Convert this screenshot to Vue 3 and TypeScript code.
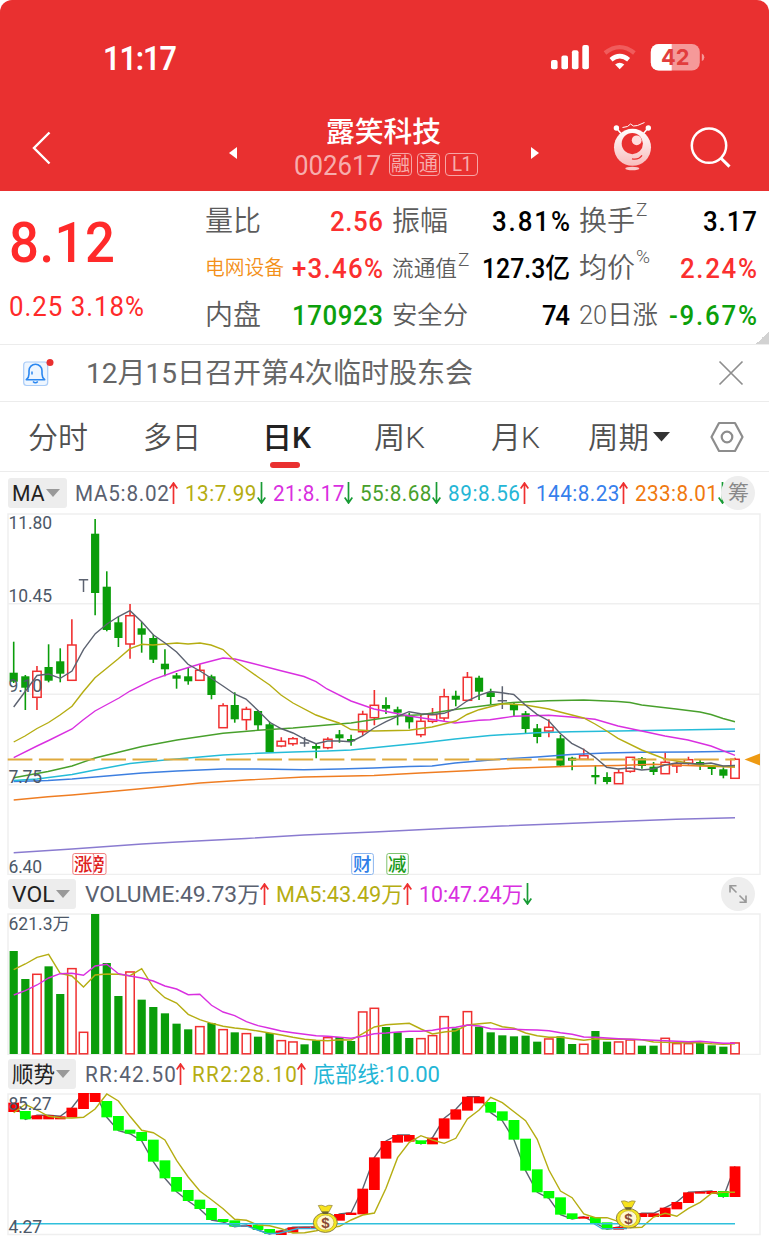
<script setup lang="ts">
import { h } from 'vue'

interface FitProps { t: string; w: number; s: number }

/* Single line of text set to an exact advance width, centred on its cap height.
   Figures are condensed a little and tracked out. */
const Fit = (p: FitProps) => {
  const figures = /\d/.test(p.t) && /^[\x20-\x7e]+$/.test(p.t)
  const k = figures ? 0.94 : 1
  return h('svg', { width: p.w, height: p.s, class: 'fit', style: { overflow: 'visible', display: 'block', flex: 'none' } }, [
    h('text', {
      x: 0, y: p.s * 0.855, 'font-size': p.s, textLength: p.w / k,
      lengthAdjust: figures ? 'spacing' : 'spacingAndGlyphs',
      transform: `scale(${k} 1)`, fill: 'currentColor',
    }, p.t),
  ])
}
Fit.props = ['t', 'w', 's']

const stats = [
  { k: '量比', kw: 56, ks: 28, v: '2.56', vw: 53, c: 'red' },
  { k: '振幅', kw: 56, ks: 28, v: '3.81%', vw: 78, c: 'black' },
  { k: '换手', kw: 56, ks: 28, sup: 'Z', v: '3.17', vw: 54, c: 'black' },
  { k: '电网设备', kw: 79, ks: 20, v: '+3.46%', vw: 91, c: 'red', kc: 'orange' },
  { k: '流通值', kw: 65, ks: 21.7, sup: 'Z', v: '127.3亿', vw: 88, c: 'black' },
  { k: '均价', kw: 56, ks: 28, sup: '%', v: '2.24%', vw: 77, c: 'red' },
  { k: '内盘', kw: 56, ks: 28, v: '170923', vw: 91, c: 'green' },
  { k: '安全分', kw: 76, ks: 25.5, v: '74', vw: 28, c: 'black' },
  { k: '20日涨', kw: 79, ks: 26, v: '-9.67%', vw: 88, c: 'green' },
]

interface Ind { t: string; w: number; c: string; a?: 'up' | 'down' }
const maRow: Ind[] = [
  { t: 'MA5:8.02', w: 94, c: 'slate', a: 'up' },
  { t: '13:7.99', w: 71.5, c: 'olive', a: 'down' },
  { t: '21:8.17', w: 71.5, c: 'magenta', a: 'down' },
  { t: '55:8.68', w: 71.5, c: 'leaf', a: 'down' },
  { t: '89:8.56', w: 72, c: 'cyan', a: 'up' },
  { t: '144:8.23', w: 83.5, c: 'blue', a: 'up' },
  { t: '233:8.01', w: 83, c: 'amber', a: 'down' },
]
const volRow: Ind[] = [
  { t: 'VOLUME:49.73万', w: 175, c: 'slate', a: 'up' },
  { t: 'MA5:43.49万', w: 127, c: 'olive', a: 'up' },
  { t: '10:47.24万', w: 104, c: 'magenta', a: 'down' },
]
const rrRow: Ind[] = [
  { t: 'RR:42.50', w: 91, c: 'slate', a: 'up' },
  { t: 'RR2:28.10', w: 105, c: 'olive', a: 'up' },
  { t: '底部线:10.00', w: 127, c: 'cyan' },
]

const X0 = 13.7
const STEP = 11.634
const cx = (i: number) => X0 + STEP * i

/* kind, high, body top, body bottom, low */
type Candle = [string, number, number, number, number]
const candles: Candle[] = [
  ['g', 641.7, 672.7, 681.7, 683], ['g', 675, 676.3, 687.7, 710], ['r', 666, 671.3, 697.3, 710],
  ['g', 644.3, 667, 680.7, 682.3], ['g', 648.3, 661.3, 673.7, 682.3], ['r', 619.3, 645, 680.3, 680.3],
  ['t', 579, 579, 592, 592], ['g', 519, 533.7, 593, 615.3], ['g', 571.3, 586.7, 630, 631.3],
  ['g', 616.7, 622.3, 638, 647], ['r', 604, 615.7, 644, 658.7], ['g', 622, 628.3, 634.7, 652.7],
  ['g', 634.7, 638, 659.7, 663], ['g', 649.3, 663.7, 669.3, 676.3], ['g', 673, 675.3, 678.7, 688.7],
  ['g', 668, 676.3, 681.3, 684.7], ['r', 664.3, 670.3, 680.3, 680.3], ['g', 674.7, 676.3, 695, 699.3],
  ['r', 703.3, 705.7, 727.7, 727.7], ['g', 692.3, 705, 719.3, 722.7], ['r', 706.7, 709.3, 719.7, 730.3],
  ['g', 710, 711, 725.3, 730], ['g', 721.7, 724.3, 752.3, 752.3], ['r', 737.3, 741.3, 746, 747.3],
  ['r', 737, 738.7, 743.7, 745.7], ['d', 737, 743, 743, 746.7], ['g', 744, 746, 748.7, 758.3],
  ['r', 737.3, 739.3, 747.7, 749.3], ['g', 730, 734.3, 738.3, 742.7], ['g', 734.7, 739, 741.3, 745.7],
  ['r', 710.7, 714.3, 731.7, 735.7], ['r', 690, 705.3, 717.7, 725.3], ['g', 697.3, 705, 708.7, 714],
  ['g', 706.7, 709.3, 712.7, 725.3], ['g', 712.7, 716, 722.3, 728.7], ['r', 714.7, 721.3, 734.7, 737.3],
  ['r', 708, 714.7, 721.3, 723.3], ['r', 688.7, 696.7, 718, 720.7], ['g', 690.7, 695.7, 699.7, 706.3],
  ['r', 672, 677.3, 700.3, 700.3], ['g', 675.7, 677.7, 691.7, 700], ['g', 688.7, 692.3, 697, 704.3],
  ['d', 686.3, 700.7, 700.7, 709], ['g', 702.7, 704, 710.3, 716], ['g', 711, 713.3, 729, 733],
  ['g', 724, 728.3, 737, 743.3], ['r', 719.3, 727.3, 731, 737.3], ['g', 735, 738.3, 765.7, 766.7],
  ['g', 756.7, 757.7, 760.7, 770.3], ['r', 748.7, 755.7, 759.3, 759.3], ['g', 765.3, 775, 777.3, 784.3],
  ['g', 772.3, 777, 782, 784.3], ['r', 769.3, 772.7, 783.7, 783.7], ['r', 757.3, 757.3, 771.3, 772.7],
  ['g', 757, 758.3, 766, 768.7], ['g', 762, 766.7, 772, 775], ['r', 752.7, 762.3, 773.7, 773.7],
  ['r', 761.7, 763.7, 766, 773], ['r', 756.7, 759.7, 763.3, 764.7], ['g', 760, 762, 765.3, 770],
  ['g', 765.3, 766.3, 769, 775], ['g', 767.3, 769.3, 775.7, 778.3], ['r', 757.7, 759.3, 778.3, 778.3],
]

const lines = [
  { c: '#8a7bd0', p: '13.7,852.7 72,849 142,844 177,842 246,838.5 304,835 374,832 444,828.5 502,826 560,823.7 630,821 676,819.3 735,817.7' },
  { c: '#ef7d22', p: '13.7,800 48,796.7 72,795 119,790.7 165,786.5 200,783 246,780 304,777 374,775.5 420,773 467,770.7 513,768.3 571,766.3 618,765.5 653,764.3 700,766 735,767' },
  { c: '#3d7fe0', p: '13.7,781.5 48,780.5 72,779 95,777 142,773 177,771 223,769 258,769 304,769.7 340,769 374,768 409,766.5 432,766 455,763 479,761 502,759 537,757 571,754.5 606,753 641,752.3 688,752 735,751.3' },
  { c: '#25bcd8', p: '13.7,780.5 37,779 72,774.5 95,770 130,763.5 165,760 200,757 223,755 258,753.3 293,752 327,751 351,750 386,746.5 421,743 455,739 490,735.5 537,732.7 571,731.7 618,731 735,729' },
  { c: '#48a02c', p: '13.7,777.7 48,771.5 72,766 95,758 142,746.5 177,740 223,733.3 258,730.3 293,728 327,725 351,723 397,716 421,714.7 455,709.5 490,705 513,702.5 548,700.7 583.7,700 618,701.5 630,702.5 641.7,705 676,709 700,712 711,714.5 723,718.5 735,721.7' },
  { c: '#d92fe0', p: '13.7,757.7 37,746 48.6,740.5 72,729 83,720 95,711 119,698 130,691 153,679.7 177,671 200,664 223,658 235,659 250,662.7 281,670.7 304,676.5 316,681.7 327,689 351,701 374,709 409,716 444,721.3 455,723 479,720.3 490,719.7 502,718 513.7,716.3 548.7,715.3 571,717 595,719.3 618,726 641.7,731 665,736 688,740 711,746 735,755.3' },
  { c: '#b5ad12', p: '13.7,742 25,736 37,728.5 48.6,722.5 60,715 72,706.3 83,692 95,677.7 107,668 118,659 130,648.7 142,644.3 153,645 177,643 188,644 200,643 211,645 223,649.5 234,660 246,668.5 258,677 269.7,685 281,695 293,703 316,715 327,719 339,723 351,729.5 374,731 409,730.3 432,727 456,721 467,714.5 479,709.7 502,703.7 525,705 548.7,709 560,712 583.7,718 595,724 606.7,731 618,738.3 641.7,750 665,759 688,763 700,765 735,767' },
  { c: '#5c6270', p: '13.7,707 37,675.5 48.6,674 60.3,678.3 72,671 83.6,649.3 95.3,633.7 107,624 118.5,616.5 130,610.7 141.7,621.7 153.5,635 165,643 176.6,652 188,664.3 200,671 211,678 223,686 234.6,694 246,699 258,710.5 269.7,722.3 281,728.5 293,733 304.6,739 316,743.7 327.6,741 339,741 351,741.7 362.6,736 374,728 386,721.7 397.5,716.3 409,711.7 420.6,713.7 432,714.5 444,713.3 455.6,709 467,701 479,695.3 490.3,691.5 502,692.7 513.7,694.5 525,704.7 537,714.3 548.7,720.7 560,733.3 571.7,743.3 583,749 595,757.3 606.7,767.3 618,769 630,768 641.7,770 653,769 665,765 676,763 688,763.5 700,764 711,763 723,766 735,765.5' },
]

const priceAxis = [
  { t: '11.80', y: 528.7 }, { t: '10.45', y: 602 }, { t: '9.10', y: 692 }, { t: '7.75', y: 782.5 }, { t: '6.40', y: 872.7 },
]

/* Volume and trend series are stored in thirds of a pixel below the panel's header row. */
const vols: [string, number][] = [
  ['g', 228], ['g', 312], ['r', 297], ['g', 274], ['g', 357], ['r', 280], ['r', 471], ['g', 117], ['g', 264], ['g', 363],
  ['r', 290], ['g', 374], ['g', 396], ['g', 415], ['g', 446], ['g', 463], ['r', 454], ['g', 444], ['r', 463], ['g', 472],
  ['r', 475], ['g', 485], ['g', 474], ['r', 496], ['r', 500], ['g', 508], ['g', 496], ['r', 487], ['g', 486], ['g', 498],
  ['r', 410], ['r', 399], ['g', 456], ['g', 472], ['g', 489], ['r', 490], ['r', 481], ['r', 424], ['g', 460], ['r', 409],
  ['g', 455], ['g', 472], ['g', 481], ['g', 484], ['g', 482], ['g', 500], ['r', 491], ['g', 484], ['g', 507], ['r', 507],
  ['g', 468], ['g', 500], ['r', 500], ['r', 494], ['g', 512], ['g', 512], ['r', 489], ['r', 505], ['r', 505], ['g', 504],
  ['g', 511], ['g', 515], ['r', 503],
]
const vma5 = [284, 267, 247, 238, 295, 303, 336, 300, 297, 298, 302, 281, 337, 368, 384, 418, 434, 445, 454, 459, 463, 468, 474, 480, 487, 493, 496, 497, 494, 495, 476, 456, 449, 447, 445, 462, 477, 471, 467, 450, 446, 443, 455, 460, 474, 482, 487, 487, 491, 496, 491, 493, 493, 493, 494, 501, 502, 503, 503, 503, 506, 508, 506]
const vma10 = [360, 347, 330, 309, 296, 295, 301, 273, 268, 296, 303, 309, 318, 333, 342, 359, 358, 391, 411, 422, 440, 452, 460, 468, 473, 478, 482, 484, 487, 490, 484, 476, 474, 471, 469, 469, 466, 460, 457, 450, 453, 461, 463, 463, 464, 465, 467, 473, 478, 486, 487, 489, 491, 493, 494, 496, 497, 499, 500, 499, 502, 505, 505]

const rr: [string, number, number][] = [
  ['r', 143, 171], ['g', 168, 193], ['r', 181, 193], ['r', 181, 193], ['r', 184, 193], ['r', 158, 187], ['r', 113, 162], ['r', 113, 141],
  ['g', 138, 187], ['g', 183, 227], ['g', 224, 236], ['g', 231, 258], ['g', 254, 320], ['g', 316, 370], ['g', 366, 410], ['g', 405, 438],
  ['g', 434, 462], ['g', 459, 495], ['g', 492, 501], ['g', 496, 515], ['r', 510, 516], ['g', 509, 525], ['g', 522, 537], ['r', 527, 540],
  ['r', 517, 533], ['r', 516, 521], ['r', 515, 520], ['r', 495, 518], ['r', 477, 497], ['r', 473, 480], ['r', 401, 478], ['r', 307, 405],
  ['r', 258, 311], ['r', 240, 263], ['r', 240, 260], ['g', 256, 267], ['r', 248, 268], ['r', 190, 251], ['r', 163, 194], ['r', 125, 167],
  ['r', 125, 145], ['g', 141, 173], ['g', 169, 197], ['g', 195, 254], ['g', 251, 347], ['g', 343, 412], ['g', 408, 430], ['g', 427, 479],
  ['g', 475, 492], ['r', 485, 491], ['g', 486, 504], ['g', 502, 523], ['r', 516, 524], ['r', 485, 518], ['r', 475, 486], ['r', 475, 486],
  ['r', 458, 486], ['r', 441, 463], ['r', 412, 444], ['r', 410, 416], ['r', 408, 417], ['g', 408, 426], ['r', 334, 426],
]
const rr2 = [173, 148, 165, 184, 188, 189, 187, 162, 117, 138, 184, 226, 233, 255, 316, 366, 408, 434, 461, 493, 496, 510, 512, 521, 534, 533, 527, 519, 514, 495, 480, 474, 400, 308, 262, 242, 255, 265, 250, 192, 165, 127, 143, 170, 197, 253, 345, 408, 428, 477, 488, 488, 500, 518, 517, 486, 475, 484, 460, 442, 415, 412, 412]

const path = (a: number[], base: number) => a.map((v, i) => `${cx(i).toFixed(1)},${(base + v / 3).toFixed(1)}`).join(' ')
const rrLine = rr.map(([k, a, b]) => (k === 'r' ? a : b))
const bags = [{ x: 325.3, y: 1219 }, { x: 628.3, y: 1214.7 }]
</script>

<template>
  <div class="app">
    <header class="top">
      <div class="status">
        <div class="clock"><Fit t="11:17" :w="74" :s="32.5" /></div>
        <svg class="signals" width="156" height="30" viewBox="549 43 156 30">
          <g fill="#fff">
            <rect x="551" y="60" width="6.6" height="9.3" rx="2" />
            <rect x="561.4" y="55.6" width="6.6" height="13.7" rx="2" />
            <rect x="571.9" y="50.2" width="6.6" height="19.1" rx="2" />
            <rect x="582.3" y="45" width="6.6" height="24.3" rx="2" />
            <path d="M619.7 69.2l-4.6-4.7q4.6-3.6 9.2 0z" />
          </g>
          <path d="M611 59.8q8.8-7.2 17.6 0" fill="none" stroke="#fff" stroke-width="4.6" />
          <path d="M605 53q14.7-11.8 29.4 0" fill="none" stroke="#f05c5c" stroke-width="4.2" />
          <rect x="650.8" y="44" width="49" height="26.6" rx="8" fill="#f59999" />
          <path d="M658.8 44H671.7V70.6H658.8a8 8 0 0 1-8-8V52a8 8 0 0 1 8-8z" fill="#fff" />
          <path d="M701.8 53.5q2.5 1 2.5 3.8t-2.5 3.8z" fill="#f59999" />
          <text x="661" y="65.2" textLength="28.5" lengthAdjust="spacingAndGlyphs" class="batt">42</text>
        </svg>
      </div>
      <div class="nav">
        <svg class="back" width="20" height="34" viewBox="0 0 20 34"><path d="M17.5 1.5L2 17l15.5 15.5" fill="none" stroke="#fff" stroke-width="2.4" /></svg>
        <svg class="prev" width="8" height="12"><path d="M8 0v12L0 6z" fill="#fff" /></svg>
        <div class="title">
          <div class="name"><Fit t="露笑科技" :w="115" :s="28.7" /></div>
          <div class="code">
            <Fit t="002617" :w="87" :s="27.5" />
            <span class="tag first"><Fit t="融" :w="19" :s="19" /></span>
            <span class="tag"><Fit t="通" :w="19" :s="19" /></span>
            <span class="tag wide"><Fit t="L1" :w="20" :s="20" /></span>
          </div>
        </div>
        <svg class="next" width="8" height="12"><path d="M0 0v12l8-6z" fill="#fff" /></svg>
        <svg class="robot" width="42" height="50" viewBox="611 122 42 50">
          <defs>
            <linearGradient id="rb" x1="0" y1="0" x2="0" y2="1"><stop offset="0" stop-color="#fff" /><stop offset="1" stop-color="#f8bcbc" /></linearGradient>
          </defs>
          <g stroke="#fff" fill="none">
            <path d="M616 128.5l5 6M648.5 128.5l-5 6" stroke-width="1.5" />
            <path d="M622.5 128.5l5-1 3-2.5 3 2 4-.5 7-3" stroke-width="1" />
          </g>
          <circle cx="616.4" cy="129" r="2.7" fill="#fff" /><circle cx="648.3" cy="129" r="2.7" fill="#fff" />
          <circle cx="632.5" cy="148.3" r="18.5" fill="url(#rb)" />
          <circle cx="632.3" cy="144.6" r="10.6" fill="#e93030" />
          <circle cx="636.7" cy="141.3" r="4.9" fill="#fdd" />
          <path d="M632 159.8q6.5 1.5 10-3.5" fill="none" stroke="#e93030" stroke-width="1.3" />
          <ellipse cx="632.3" cy="169.5" rx="7" ry="1.7" fill="#fac8c8" />
        </svg>
        <svg class="search" width="42" height="42" viewBox="690 127 42 42">
          <g fill="none" stroke="#fff" stroke-width="2.5"><circle cx="709" cy="145.6" r="17.2" /><path d="M720.5 157.8l9 8.8" stroke-width="3" /></g>
        </svg>
      </div>
    </header>

    <section class="quote">
      <div class="price">
        <div class="last"><Fit t="8.12" :w="106" :s="56" /></div>
        <div class="chg"><Fit t="0.25 3.18%" :w="135" :s="27.5" /></div>
      </div>
      <div class="stats">
        <div v-for="s in stats" :key="s.k" class="cell">
          <div class="key" :class="s.kc"><Fit :t="s.k" :w="s.kw" :s="s.ks" /><span v-if="s.sup" class="sup">{{ s.sup }}</span></div>
          <div class="val" :class="s.c"><Fit :t="s.v" :w="s.vw" :s="27.5" /></div>
        </div>
      </div>
      <i class="fold"></i>
    </section>

    <section class="notice">
      <svg class="bell" width="32" height="32" viewBox="22 355 32 32">
        <rect x="23.7" y="361" width="24" height="23.5" rx="3" fill="#eef6ff" stroke="#a9ccf8" stroke-width="1.2" />
        <path d="M26.3 378.7q2.7-2.2 2.7-5.7v-3.3a6.5 6.5 0 0 1 13 0v3.3q0 3.5 2.7 5.7z" fill="none" stroke="#2b87f0" stroke-width="1.6" stroke-linejoin="round" />
        <path d="M33 380.5q2.4 2.6 4.8 0M32 370.5v3" fill="none" stroke="#2b87f0" stroke-width="1.5" />
        <circle cx="50" cy="361.5" r="3.5" fill="#e93030" />
      </svg>
      <Fit class="ntext" t="12月15日召开第4次临时股东会" :w="387" :s="28" />
      <svg class="close" width="26" height="26" viewBox="0 0 26 26"><path d="M1.5 1.5l23 23M24.5 1.5l-23 23" stroke="#8e8e8e" stroke-width="1.7" /></svg>
    </section>

    <nav class="tabs">
      <div class="tab"><Fit t="分时" :w="60" :s="30" /></div>
      <div class="tab"><Fit t="多日" :w="58" :s="30" /></div>
      <div class="tab on"><Fit t="日K" :w="49" :s="30" /></div>
      <div class="tab"><Fit t="周K" :w="51" :s="30" /></div>
      <div class="tab"><Fit t="月K" :w="49" :s="30" /></div>
      <div class="tab period"><Fit t="周期" :w="61" :s="30" /><svg width="17" height="10"><path d="M0 0h17l-8.5 9.5z" fill="#333" /></svg></div>
      <svg class="hex" width="36" height="32" viewBox="0 0 36 32"><g fill="none" stroke="#8d8d8d" stroke-width="2.2"><path d="M10 2h16l7.5 14-7.5 14H10L2.5 16z" stroke-linejoin="round" /><circle cx="18" cy="16" r="5.3" /></g></svg>
    </nav>

    <div class="ind ma">
      <div class="pill short"><Fit t="MA" :w="32.5" :s="22" /><i></i></div>
      <div class="vals">
        <div v-for="m in maRow" :key="m.t" class="v" :class="m.c">
          <Fit :t="m.t" :w="m.w" :s="22" />
          <svg v-if="m.a" class="arr" :class="m.a" width="9" height="22"><path d="M4.5 22V1M.7 6.5L4.5 1l3.8 5.5" /></svg>
        </div>
      </div>
      <div class="round"><Fit t="筹" :w="21" :s="21" /></div>
    </div>

    <svg class="panel" width="769" height="362" viewBox="0 513 769 362">
      <g stroke="#efefef" stroke-width="1.5" fill="none">
        <path d="M8 514H760V874.5H8zM8 603.7H760M8 694.3H760M8 784.7H760" />
      </g>
      <g v-for="(c, i) in candles" :key="i">
        <template v-if="c[0] === 'g'">
          <path :d="`M${cx(i)} ${c[1]}V${c[4]}`" stroke="#0a9d0a" stroke-width="1.6" />
          <rect :x="cx(i) - 4.1" :y="c[2]" width="8.2" :height="c[3] - c[2]" fill="#0a9d0a" />
        </template>
        <template v-else-if="c[0] === 'r'">
          <path :d="`M${cx(i)} ${c[1]}V${c[2]}M${cx(i)} ${c[3]}V${c[4]}`" stroke="#f03030" stroke-width="1.6" />
          <rect :x="cx(i) - 4.2" :y="c[2]" width="8.4" :height="c[3] - c[2]" fill="none" stroke="#f03030" stroke-width="1.5" />
        </template>
        <path v-else-if="c[0] === 'd'" :d="`M${cx(i)} ${c[1]}V${c[4]}M${cx(i) - 4.7} ${c[2]}h9.4`" stroke="#5c6270" stroke-width="1.5" />
        <path v-else :d="`M${cx(i)} ${c[1]}V${c[4]}M${cx(i) - 4.7} 579.7h9.4`" stroke="#5c6270" stroke-width="1.5" />
      </g>
      <polyline v-for="l in lines" :key="l.c" :points="l.p" fill="none" :stroke="l.c" stroke-width="1.4" />
      <path d="M7.7 759.5H735" stroke="#dfa93c" stroke-width="1.8" stroke-dasharray="24.7 6.5" />
      <path d="M744.5 759.5l15.5-6v12z" fill="#ee9a13" />
      <g class="axis"><text v-for="a in priceAxis" :key="a.t" x="8.5" :y="a.y" :textLength="a.t.length > 4 ? 43.5 : 33.5">{{ a.t }}</text></g>
      <g class="marks">
        <g class="m-red"><rect x="84.5" y="853.5" width="21.5" height="21" rx="2" /><text x="86" y="871">榜</text></g>
        <g class="m-red"><rect x="72.8" y="853.5" width="21" height="21" rx="2" /><text x="74" y="871">涨</text></g>
        <g class="m-blue"><rect x="351.7" y="853.5" width="21.7" height="21" rx="2" /><text x="353" y="871">财</text></g>
        <g class="m-green"><rect x="386.8" y="853.5" width="21.5" height="21" rx="2" /><text x="388" y="871">减</text></g>
      </g>
    </svg>

    <div class="ind">
      <div class="pill"><Fit t="VOL" :w="42.5" :s="22" /><i></i></div>
      <div class="vals">
        <div v-for="m in volRow" :key="m.t" class="v" :class="m.c">
          <Fit :t="m.t" :w="m.w" :s="22" />
          <svg v-if="m.a" class="arr" :class="m.a" width="9" height="22"><path d="M4.5 22V1M.7 6.5L4.5 1l3.8 5.5" /></svg>
        </div>
      </div>
      <div class="round"><svg width="20" height="20" viewBox="0 0 20 20"><path d="M8.5 8.5L2 2M2 8.5V1.8H8.5M11.5 11.5L18 18M18 11.5V18.2H11.5" fill="none" stroke="#999" stroke-width="1.6" /></svg></div>
    </div>

    <svg class="panel" width="769" height="142" viewBox="0 913 769 142">
      <path d="M8 914H760V1054.5H8z" stroke="#efefef" stroke-width="1.5" fill="none" />
      <g class="axis"><text x="8.5" y="930" textLength="61.5">621.3万</text></g>
      <template v-for="(v, i) in vols" :key="i">
        <rect v-if="v[0] === 'g'" :x="cx(i) - 4.1" :y="875 + v[1] / 3" width="8.2" :height="179 - v[1] / 3" fill="#0a9d0a" />
        <rect v-else :x="cx(i) - 4.2" :y="875.3 + v[1] / 3" width="8.4" :height="178.5 - v[1] / 3" fill="#fff" stroke="#f03030" stroke-width="1.5" />
      </template>
      <polyline :points="path(vma5, 875)" fill="none" stroke="#b5ad12" stroke-width="1.4" />
      <polyline :points="path(vma10, 875)" fill="none" stroke="#d92fe0" stroke-width="1.4" />
    </svg>

    <div class="ind">
      <div class="pill"><Fit t="顺势" :w="43" :s="22" /><i></i></div>
      <div class="vals">
        <div v-for="m in rrRow" :key="m.t" class="v" :class="m.c">
          <Fit :t="m.t" :w="m.w" :s="22" />
          <svg v-if="m.a" class="arr" :class="m.a" width="9" height="22"><path d="M4.5 22V1M.7 6.5L4.5 1l3.8 5.5" /></svg>
        </div>
      </div>
    </div>

    <svg class="panel" width="769" height="145" viewBox="0 1093 769 145">
      <path d="M8 1094H760V1234.5H8z" stroke="#efefef" stroke-width="1.5" fill="none" />
      <polyline :points="path(rrLine, 1055)" fill="none" stroke="#5c6270" stroke-width="1.4" />
      <rect v-for="(b, i) in rr" :key="i" :x="cx(i) - 5.4" :y="1055 + b[1] / 3" width="10.8" :height="(b[2] - b[1]) / 3" :fill="b[0] === 'r' ? '#ff0000' : '#00ff00'" />
      <polyline :points="path(rr2, 1055)" fill="none" stroke="#b5ad12" stroke-width="1.4" />
      <path d="M13.7 1223.7H735" stroke="#2fc0dc" stroke-width="1.6" />
      <path d="M228 1223.7l6 2.3h12l22 7.5h10l20-5h20M594 1223.7l8 5h25" fill="none" stroke="#3ba9d8" stroke-width="1.3" />
      <g v-for="b in bags" :key="b.x" :transform="`translate(${b.x} ${b.y})`">
        <path d="M-7-13.5q3.5-1 7 1 3.5-2 7-1L3.5-7h-7z" fill="#f7e21c" stroke="#9a8d4a" stroke-width=".8" />
        <ellipse cx="0" cy="3.6" rx="12" ry="9.8" fill="#f3e61e" stroke="#8d8248" stroke-width="1" />
        <ellipse cx="0" cy="3.6" rx="8.6" ry="7.6" fill="#fff8cf" stroke="#c0ad2c" stroke-width=".7" />
        <path d="M-3.5-7.5h7l-1 2.5h-5z" fill="#6d6534" />
        <text x="0" y="9" class="bag">$</text>
      </g>
      <g class="axis"><text x="8.5" y="1109.7" textLength="43">85.27</text><text x="8.5" y="1232.5" textLength="33.5">4.27</text></g>
    </svg>
  </div>
</template>

<style>
body { background: #fff; }
</style>

<style scoped>
.app { width: 769px; height: 1238px; overflow: hidden; background: #fff; font-family: Roboto, "Noto Sans CJK SC", sans-serif; color: #333; }
.top { height: 191px; background: #e93030; border-radius: 12px 12px 0 0; color: #fff; }
.status { display: flex; justify-content: space-between; align-items: center; height: 116px; padding: 0 64px 0 103px; }
.clock { font-weight: 600; }
.batt { font: 700 22px Inter, sans-serif; fill: #e23d3d; }
.nav { display: flex; align-items: flex-start; height: 75px; padding-left: 32px; }
.back { margin-top: 15px; }
.prev { margin: 31px 0 0 177px; }
.title { width: 294px; display: flex; flex-direction: column; align-items: center; }
.name { font-weight: 500; margin: 1px 1px 0 0; }
.code { display: flex; align-items: center; margin: 5px 0 0 4px; color: #f7adad; }
.tag { display: flex; align-items: center; justify-content: center; box-sizing: border-box; width: 23px; height: 23px; margin-left: 5px; border: 1px solid #f7a5a5; border-radius: 4px; }
.tag.first { margin-left: 8px; }
.tag.wide { width: 33px; }
.next { margin-top: 31px; }
.robot { margin: 5px 0 0 72px; }
.search { margin: 11px 0 0 37px; }

.quote { position: relative; box-sizing: border-box; display: flex; height: 154px; border-bottom: 1px solid #ececec; }
.price { width: 205px; color: #ff2a2a; }
.last { margin: 23px 0 0 9px; font-weight: 500; }
.chg { margin: 22px 0 0 9px; }
.stats { display: grid; grid-template-columns: repeat(3, 178px); grid-template-rows: repeat(3, 47px); column-gap: 9px; padding-top: 6px; }
.cell { display: flex; justify-content: space-between; align-items: center; }
.key { display: flex; color: #5c5c5c; font-weight: 350; }
.key.orange { color: #f39019; }
.sup { font-size: 19px; line-height: 19px; margin: -7px 0 0 1px; width: 0; }
.val { font-weight: 500; }
.red { color: #fb2f2f; }
.black { color: #000; }
.green { color: #0ca00c; }
.fold { position: absolute; right: 0; bottom: 0; width: 13px; height: 13px; background: linear-gradient(135deg, transparent 50%, #d2d2d2 50%); }

.notice { box-sizing: border-box; display: flex; align-items: center; height: 57px; padding: 0 25px 0 22px; border-bottom: 1px solid #ececec; }
.bell { margin-top: -3px; }
.ntext { margin-left: 32px; color: #666; }
.close { margin-left: auto; }

.tabs { box-sizing: border-box; display: flex; align-items: center; height: 70px; padding-left: 28px; border-bottom: 1px solid #ececec; color: #505050; font-weight: 350; }
.tab { margin-right: 55px; }
.tab:nth-child(2) { margin-right: 61px; }
.tab.on { position: relative; margin-right: 63px; color: #222; font-weight: 500; }
.tab.on::after { content: ""; position: absolute; left: 8px; top: 40px; width: 30px; height: 6px; border-radius: 3px; background: #e93030; }
.tab:nth-child(4) { margin-right: 66px; }
.tab:nth-child(5) { margin-right: 48px; }
.tab.period { display: flex; align-items: center; gap: 4px; margin-right: 39px; }

.ind { display: flex; align-items: center; height: 38px; padding-left: 8px; }
.ind.ma { height: 41px; }
.pill { box-sizing: border-box; display: flex; align-items: center; flex: none; gap: 1px; width: 68px; height: 30px; padding-left: 4px; margin-right: 9px; border-radius: 3px; background: #ededed; color: #222; }
.pill.short { width: 59px; margin-right: 8px; }
.pill i { border: 7px solid transparent; border-top: 8px solid #999; border-bottom: 0; }
.vals { display: flex; gap: 7px; width: 636px; flex: none; }
.ma .vals { width: 646px; }
.v { display: flex; align-items: center; flex: none; }
.arr { fill: none; stroke-width: 1.7px; }
.arr.up { stroke: #ef3030; }
.arr.down { stroke: #189b35; transform: rotate(180deg); }
.round { display: flex; align-items: center; justify-content: center; flex: none; width: 34px; height: 34px; border-radius: 50%; background: #eee; color: #888; z-index: 1; }
.slate { color: #5a6170; }
.olive { color: #b5ad12; }
.magenta { color: #d92fe0; }
.leaf { color: #48a02c; }
.cyan { color: #25b6d6; }
.blue { color: #3680ec; }
.amber { color: #f0790f; }

.panel { display: block; }
.axis text { font-size: 17.5px; fill: #4d5868; }
.marks rect { fill: #fff; stroke-width: 1; }
.marks text { font-size: 18.5px; font-weight: 500; stroke: none; }
.m-red rect { stroke: #f08080; }
.m-red text { fill: #e02020; }
.m-blue rect { stroke: #8cb6ef; }
.m-blue text { fill: #2f7fe8; }
.m-green rect { stroke: #7fc470; }
.m-green text { fill: #1a9a1a; }
.bag { font: 700 15px "Liberation Sans", sans-serif; fill: #8a4a35; text-anchor: middle; }
</style>
